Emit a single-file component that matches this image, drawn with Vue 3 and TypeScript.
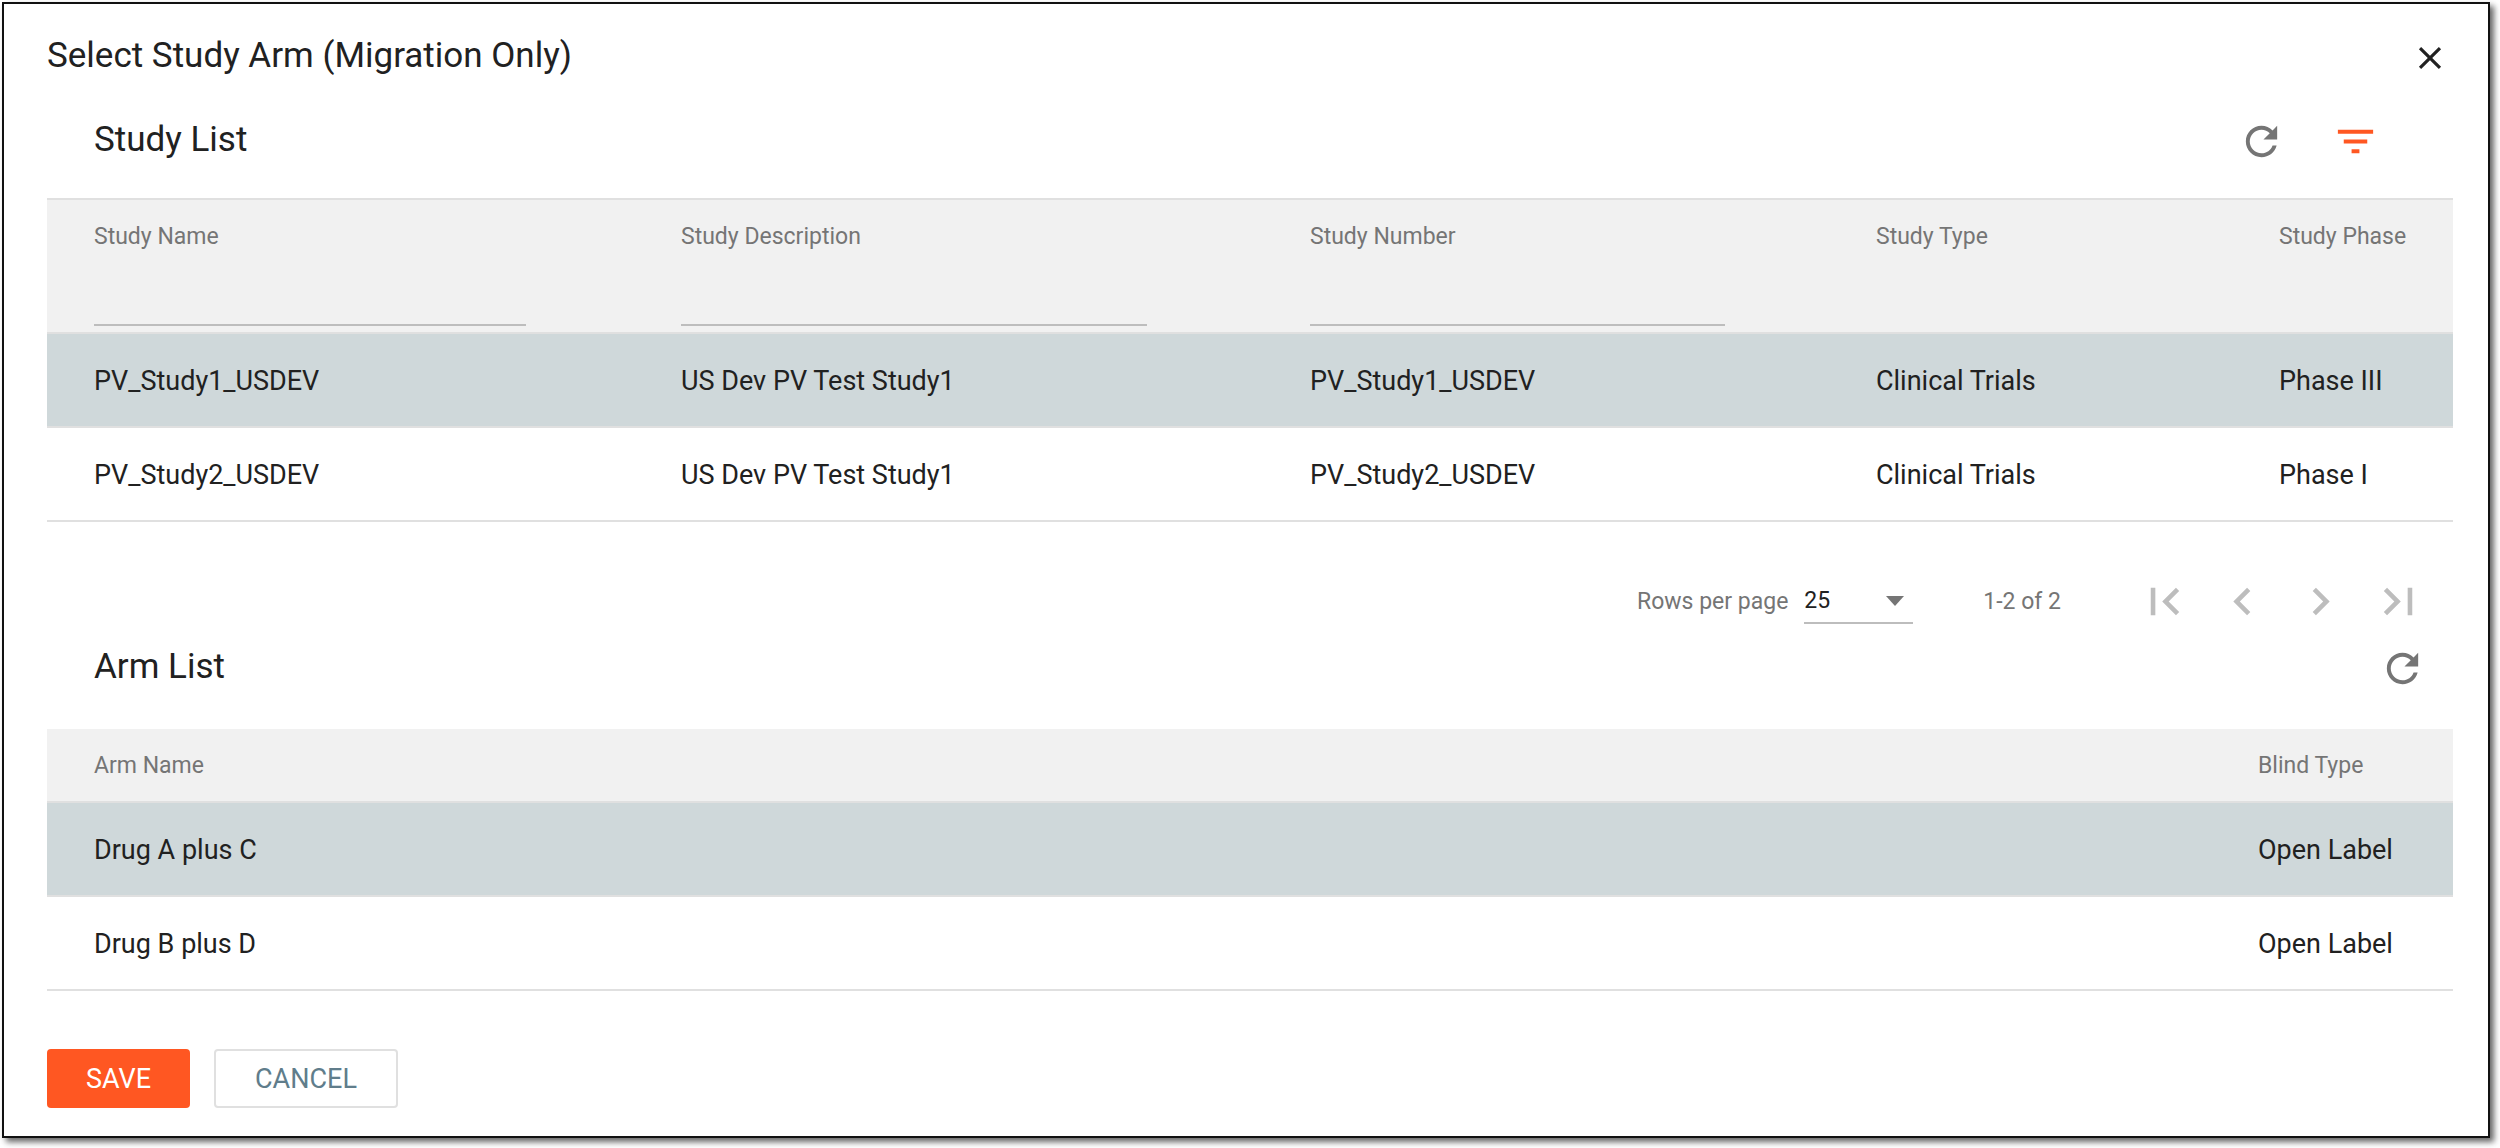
<script setup lang="ts">
import { ref } from 'vue'

interface Column<T> {
  key: keyof T & string
  label: string
  weight: number
  filter?: boolean
}

interface Study {
  name: string
  description: string
  number: string
  type: string
  phase: string
}

interface Arm {
  name: string
  blind: string
}

const studyColumns: Column<Study>[] = [
  { key: 'name', label: 'Study Name', weight: 634, filter: true },
  { key: 'description', label: 'Study Description', weight: 629, filter: true },
  { key: 'number', label: 'Study Number', weight: 566, filter: true },
  { key: 'type', label: 'Study Type', weight: 403 },
  { key: 'phase', label: 'Study Phase', weight: 174 },
]

const studies: Study[] = [
  { name: 'PV_Study1_USDEV', description: 'US Dev PV Test Study1', number: 'PV_Study1_USDEV', type: 'Clinical Trials', phase: 'Phase III' },
  { name: 'PV_Study2_USDEV', description: 'US Dev PV Test Study1', number: 'PV_Study2_USDEV', type: 'Clinical Trials', phase: 'Phase I' },
]

const armColumns: Column<Arm>[] = [
  { key: 'name', label: 'Arm Name', weight: 2211 },
  { key: 'blind', label: 'Blind Type', weight: 195 },
]

const arms: Arm[] = [
  { name: 'Drug A plus C', blind: 'Open Label' },
  { name: 'Drug B plus D', blind: 'Open Label' },
]

const pagerButtons = [
  { label: 'First page', path: 'M18.41 16.59L13.82 12l4.59-4.59L17 6l-6 6 6 6zM6 6h2v12H6z' },
  { label: 'Previous page', path: 'M15.41 7.41L14 6l-6 6 6 6 1.41-1.41L10.83 12z' },
  { label: 'Next page', path: 'M10 6L8.59 7.41 13.17 12l-4.58 4.59L10 18l6-6z' },
  { label: 'Last page', path: 'M5.59 7.41L10.18 12l-4.59 4.59L7 18l6-6-6-6zM16 6h2v12h-2z' },
]

const refreshPath =
  'M17.65 6.35C16.2 4.9 14.21 4 12 4c-4.42 0-7.99 3.58-7.99 8s3.57 8 7.99 8c3.73 0 6.84-2.55 7.73-6h-2.08c-.82 2.33-3.04 4-5.65 4-3.31 0-6-2.69-6-6s2.69-6 6-6c1.66 0 3.14.69 4.22 1.78L13 11h7V4l-2.35 2.35z'

const filters = ref<Record<string, string>>({ name: '', description: '', number: '' })
const selectedStudy = ref(0)
const selectedArm = ref(0)
const pageSize = ref('25')

function share(weight: number, columns: { weight: number }[]): string {
  const total = columns.reduce((sum, column) => sum + column.weight, 0)
  return `${(weight / total) * 100}%`
}
</script>

<template>
  <main class="dialog" role="dialog" aria-labelledby="dialog-title">
    <header class="dialog-head">
      <h1 id="dialog-title" class="title">Select Study Arm (Migration Only)</h1>
      <button class="icon-button close" type="button" aria-label="Close">
        <svg viewBox="0 0 24 24" aria-hidden="true">
          <path d="M19 6.41L17.59 5 12 10.59 6.41 5 5 6.41 10.59 12 5 17.59 6.41 19 12 13.41 17.59 19 19 17.59 13.41 12z" />
        </svg>
      </button>
    </header>

    <section aria-labelledby="study-title">
      <div class="toolbar study-toolbar">
        <h2 id="study-title" class="title">Study List</h2>
        <div class="tools">
          <button class="icon-button" type="button" aria-label="Refresh studies">
            <svg viewBox="0 0 24 24" aria-hidden="true"><path :d="refreshPath" /></svg>
          </button>
          <button class="icon-button active" type="button" aria-label="Filter studies">
            <svg viewBox="0 0 24 24" aria-hidden="true"><path d="M10 18h4v-2h-4v2zM3 6v2h18V6H3zm3 7h12v-2H6v2z" /></svg>
          </button>
        </div>
      </div>

      <table class="grid study-grid">
        <colgroup>
          <col v-for="column in studyColumns" :key="column.key" :style="{ width: share(column.weight, studyColumns) }" />
        </colgroup>
        <thead>
          <tr>
            <th v-for="column in studyColumns" :key="column.key" scope="col">
              <label v-if="column.filter" class="head-label" :for="`filter-${column.key}`">{{ column.label }}</label>
              <span v-else class="head-label">{{ column.label }}</span>
              <input v-if="column.filter" :id="`filter-${column.key}`" v-model="filters[column.key]" class="filter" type="text" />
            </th>
          </tr>
        </thead>
        <tbody>
          <tr v-for="(study, index) in studies" :key="index" :class="{ selected: index === selectedStudy }" @click="selectedStudy = index">
            <td v-for="column in studyColumns" :key="column.key">{{ study[column.key] }}</td>
          </tr>
        </tbody>
      </table>

      <div class="pager">
        <label class="pager-label" for="page-size">Rows per page</label>
        <div class="select-box">
          <select id="page-size" v-model="pageSize">
            <option>25</option>
            <option>50</option>
            <option>100</option>
          </select>
          <svg class="arrow" viewBox="0 0 18 10" aria-hidden="true"><path d="M0 0h18L9 10z" /></svg>
        </div>
        <span class="range">1-2 of 2</span>
        <nav class="pages" aria-label="Pagination">
          <button v-for="item in pagerButtons" :key="item.label" class="page-button" type="button" disabled :aria-label="item.label">
            <svg viewBox="0 0 24 24" aria-hidden="true"><path :d="item.path" /></svg>
          </button>
        </nav>
      </div>
    </section>

    <section aria-labelledby="arm-title">
      <div class="toolbar arm-toolbar">
        <h2 id="arm-title" class="title">Arm List</h2>
        <button class="icon-button" type="button" aria-label="Refresh arms">
          <svg viewBox="0 0 24 24" aria-hidden="true"><path :d="refreshPath" /></svg>
        </button>
      </div>

      <table class="grid">
        <colgroup>
          <col v-for="column in armColumns" :key="column.key" :style="{ width: share(column.weight, armColumns) }" />
        </colgroup>
        <thead>
          <tr>
            <th v-for="column in armColumns" :key="column.key" scope="col">
              <span class="head-label">{{ column.label }}</span>
            </th>
          </tr>
        </thead>
        <tbody>
          <tr v-for="(arm, index) in arms" :key="index" :class="{ selected: index === selectedArm }" @click="selectedArm = index">
            <td v-for="column in armColumns" :key="column.key">{{ arm[column.key] }}</td>
          </tr>
        </tbody>
      </table>
    </section>

    <footer class="actions">
      <button class="action save" type="button">SAVE</button>
      <button class="action cancel" type="button">CANCEL</button>
    </footer>
  </main>
</template>

<style>
body {
  background: #ffffff;
}
</style>

<style scoped>
* {
  box-sizing: border-box;
}

.dialog {
  margin: 2px 10px 10px 2px;
  padding: 30px 35px 28px 43px;
  border: 2px solid #111111;
  background: #ffffff;
  box-shadow: 4px 4px 6px rgba(0, 0, 0, 0.6);
  font-family: Roboto, 'Liberation Sans', sans-serif;
  font-size: 27px;
  color: #212121;
}

button,
input,
select {
  margin: 0;
  padding: 0;
  border: 0;
  background: none;
  color: inherit;
  font: inherit;
}

svg {
  display: block;
  fill: currentColor;
}

.dialog-head,
.toolbar {
  display: flex;
  justify-content: space-between;
  align-items: flex-start;
}

.title {
  margin: 0;
  font-size: 35px;
  line-height: 44px;
  font-weight: 400;
}

.icon-button {
  display: flex;
  align-items: center;
  justify-content: center;
  width: 47px;
  height: 47px;
  color: #757575;
}

.icon-button svg {
  width: 47px;
  height: 47px;
}

.icon-button.close {
  color: #212121;
}

.icon-button.close svg {
  width: 38px;
  height: 38px;
}

.icon-button.active {
  color: #ff5722;
}

.study-toolbar {
  padding: 37px 74px 33px 47px;
}

.arm-toolbar {
  padding: 5px 27px 37px 47px;
}

.tools {
  display: flex;
  gap: 47px;
}

.grid {
  width: 100%;
  table-layout: fixed;
  border-collapse: separate;
  border-spacing: 0;
}

.grid th {
  padding: 23px 47px 21px 0;
  border-bottom: 2px solid #e0e0e0;
  background: #f1f1f1;
  text-align: left;
  vertical-align: top;
  font-weight: 400;
}

.grid td {
  height: 94px;
  padding: 2px 0 0;
  border-bottom: 2px solid #e0e0e0;
  white-space: nowrap;
}

.grid th:first-child,
.grid td:first-child {
  padding-left: 47px;
}

.study-grid th {
  padding-bottom: 6px;
  border-top: 2px solid #e0e0e0;
}

.head-label {
  display: block;
  font-size: 23px;
  line-height: 28px;
  color: #757575;
  white-space: nowrap;
}

.filter {
  display: block;
  width: 80%;
  height: 47px;
  margin-top: 28px;
  border-bottom: 2px solid #bdbdbd;
  font-size: 23px;
}

.selected td {
  background: #cfd8da;
}

.pager {
  display: flex;
  justify-content: flex-end;
  align-items: center;
  padding: 40px 16px 0 0;
  font-size: 23px;
  color: #757575;
}

.pager-label {
  margin-right: 16px;
}

.select-box {
  display: grid;
  align-items: center;
  width: 109px;
  margin-right: 70px;
}

.select-box > * {
  grid-area: 1 / 1;
}

.select-box select {
  width: 100%;
  height: 46px;
  appearance: none;
  border-bottom: 2px solid #bdbdbd;
  border-radius: 0;
  color: #212121;
}

.arrow {
  justify-self: end;
  width: 18px;
  height: 10px;
  margin-right: 9px;
  pointer-events: none;
}

.range {
  margin-right: 64px;
}

.pages {
  display: flex;
}

.page-button {
  display: flex;
  align-items: center;
  justify-content: center;
  width: 78px;
  height: 78px;
  color: #bdbdbd;
}

.page-button svg {
  width: 55px;
  height: 55px;
}

.actions {
  display: flex;
  gap: 24px;
  padding-top: 58px;
}

.action {
  height: 59px;
  padding: 0 39px;
  border-radius: 4px;
}

.save {
  background: #ff5722;
  color: #ffffff;
}

.cancel {
  border: 2px solid #e0e0e0;
  color: #607d8b;
}
</style>
